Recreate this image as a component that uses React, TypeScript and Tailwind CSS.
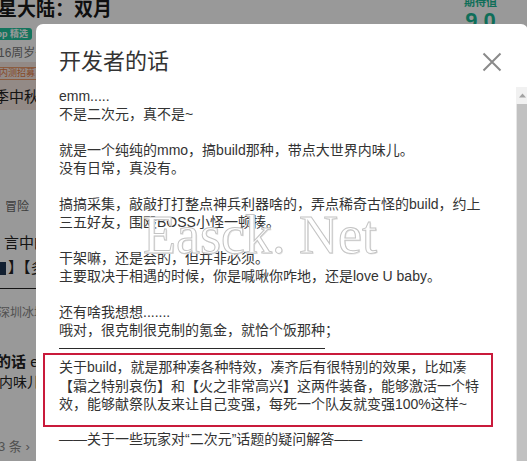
import React from "react";

const FONT = "font-['Liberation_Sans','Noto_Sans_CJK_SC',sans-serif]";

const lines: string[] = [
  "emm.....",
  "不是二次元，真不是~",
  "",
  "就是一个纯纯的mmo，搞build那种，带点大世界内味儿。",
  "没有日常，真没有。",
  "",
  "搞搞采集，敲敲打打整点神兵利器啥的，弄点稀奇古怪的build，约上三五好友，围殴BOSS小怪一顿揍。",
  "",
  "干架嘛，还是会的，但并非必须。",
  "主要取决于相遇的时候，你是喊啾你咋地，还是love U baby。",
  "",
  "还有啥我想想.......",
  "哦对，很克制很克制的氪金，就恰个饭那种；",
];

function Background() {
  return (
    <div className={`absolute inset-0 bg-white ${FONT}`}>
      <div className="flex flex-row justify-between">
        <div className="flex w-[120px] flex-col">
          <div className="-ml-[21px] -mt-[3px] whitespace-nowrap text-[19px] font-bold leading-[26px] text-[#1a1a1a]">
            火星大陆：双月
          </div>
          <div className="mt-[5px] flex">
            <span className="-ml-[14px] whitespace-nowrap rounded-[3px] bg-[#22c29c] px-[4px] text-[9px] font-bold leading-[12px] text-white">
              App 精选
            </span>
          </div>
          <div className="mt-[6px] -ml-[2px] whitespace-nowrap text-[12px] leading-[14px] text-[#777]">16周岁+</div>
          <div className="mt-[2px] flex flex-col bg-[#f6e6e0] pt-[5px] pb-[4px]">
            <div className="flex">
              <span className="-ml-[6px] whitespace-nowrap border border-[#e99a6a] px-[4px] text-[9px] leading-[11px] text-[#e07b45]">
                内测招募
              </span>
            </div>
            <div className="mt-[8px] -ml-[6px] whitespace-nowrap text-[15px] leading-[18px] text-[#222]">季中秋彩蛋</div>
          </div>
          <div className="mt-[89px] ml-[5px] whitespace-nowrap text-[12px] leading-[16px] text-[#666]">冒险</div>
          <div className="mt-[18px] ml-[4px] whitespace-nowrap text-[15px] leading-[20px] text-[#222]">言中的</div>
          <div className="mt-[5px] flex items-center whitespace-nowrap text-[15px] leading-[20px] text-[#222]">
            <span className="inline-block h-[13px] w-[6px] bg-[#1f3550]" />
            <span className="ml-[2px]">】【多</span>
          </div>
          <div className="mt-[10px] h-[1px] w-full bg-[#222]" />
          <div className="mt-[16px] -ml-[2px] whitespace-nowrap text-[12px] leading-[16px] text-[#888]">深圳冰城</div>
          <div className="mt-[31px] -ml-[4px] whitespace-nowrap text-[15px] font-bold leading-[20px] text-[#222]">
            的话 <span className="font-normal">emm</span>
          </div>
          <div className="-ml-[1px] whitespace-nowrap text-[14px] leading-[20px] text-[#222]">内味儿</div>
          <div className="mt-[46px] -ml-[2px] whitespace-nowrap text-[13px] leading-[18px] text-[#888]">3 条 ›</div>
        </div>
        <div className="mr-[30px] flex flex-col items-center">
          <div className="-mt-[4px] text-[11px] font-bold leading-[13px] text-[#1ab894]">期待值</div>
          <div className="text-[22px] font-bold leading-[24px] text-[#1ab894]">9.0</div>
        </div>
      </div>
    </div>
  );
}

export default function App() {
  return (
    <div className={`relative h-[461px] w-[527px] overflow-hidden ${FONT}`}>
      <Background />
      <div className="absolute inset-0 bg-black/40" />
      <div className="absolute left-[36px] top-[24px] flex h-[460px] w-[492px] flex-col rounded-[7px] bg-white">
        <div className="flex h-[63px] shrink-0 flex-row items-start justify-between pl-[23px] pr-[26px] pt-[23px]">
          <div className="text-[22px] leading-[30px] text-[#333]">开发者的话</div>
          <svg width="20" height="20" viewBox="0 0 20 20" className="mt-[5px]">
            <path d="M1.5 1.5 L18.5 18.5 M18.5 1.5 L1.5 18.5" stroke="#8a8a8a" strokeWidth="2" fill="none" />
          </svg>
        </div>
        <div className="flex min-h-0 flex-1 flex-row">
          <div className="w-[451px] shrink-0 pl-[23px] text-[14px] leading-[18px] text-[#333]">
            {lines.map((l, i) => (
              <p key={i}>{l === "" ? <br /> : l}</p>
            ))}
            <div className="flex h-[14px] flex-col pt-[9px]">
              <div className="h-[1px] w-[266px] bg-[#2a2a2a]" />
            </div>
            <div className="-ml-[16px] w-[450px] border-2 border-[#c91a3b] pb-[11px] pl-[14px] pr-[6px] pt-[3px] leading-[18.5px]">
              <p>
                关于build，就是那种凑各种特效，凑齐后有很特别的效果，比如凑【霜之特别哀伤】和【火之非常高兴】这两件装备，能够激活一个特效，能够献祭队友来让自己变强，每死一个队友就变强100%这样~
              </p>
            </div>
            <p className="mt-[3px]">——关于一些玩家对“二次元”话题的疑问解答——</p>
          </div>
          <div className="flex-1" />
          <div className="flex w-[12px] shrink-0 flex-col">
            <div className="flex h-[17px] items-center justify-center bg-[#f1f1f1]">
              <svg width="7" height="5" viewBox="0 0 7 5">
                <path d="M0 4.5 L3.5 0.5 L7 4.5 Z" fill="#a3a3a3" />
              </svg>
            </div>
            <div className="flex-1 border-l border-[#e6e6e6] bg-[#c1c1c1]" />
          </div>
        </div>
      </div>
      <div className="pointer-events-none absolute left-[143px] top-[208px] whitespace-nowrap font-['Liberation_Serif',serif] text-[54px] leading-[54px] text-white [-webkit-text-stroke:1px_#c4c4c4] [text-shadow:1px_1px_0_#e6e6e6]">
        Easck. Net
      </div>
    </div>
  );
}
